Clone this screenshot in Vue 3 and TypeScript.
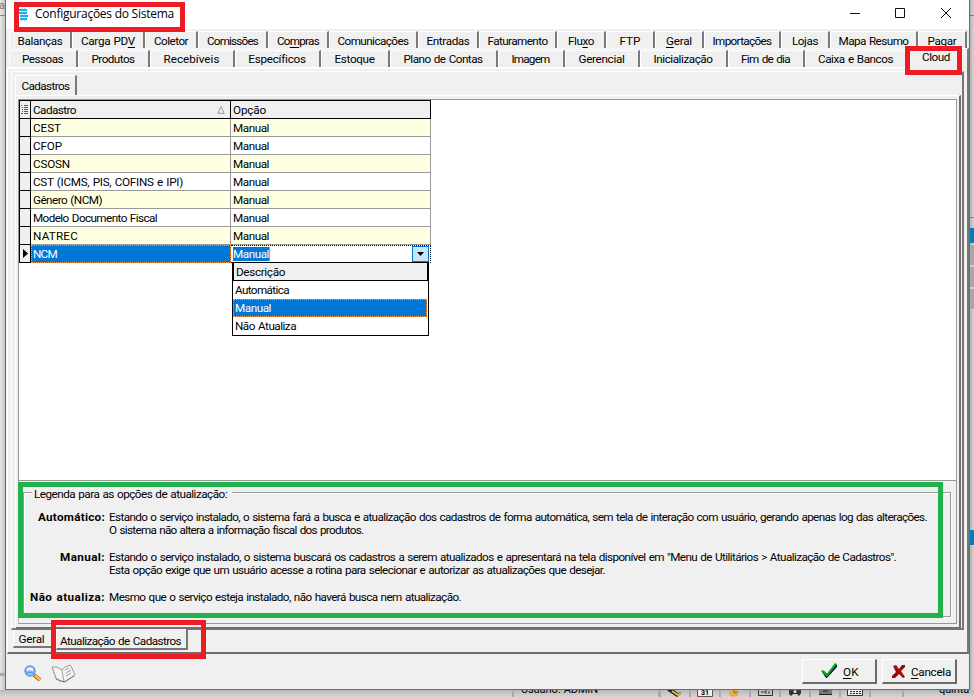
<script setup lang="ts">
import type { ObjectDirective } from 'vue'

interface Tab { w: number; t: number; pre: string; key?: string; post?: string }
interface Entry { label: string; lw: number; lines: { text: string; w: number }[] }

/* Spreads the letters of an element so that its text takes the given width. */
const vFit: ObjectDirective<HTMLElement, number> = {
  mounted(el, binding) {
    const n = (el.textContent ?? '').length
    const natural = el.getBoundingClientRect().width
    const spacing = (binding.value - natural) / n
    el.style.letterSpacing = `${spacing.toFixed(3)}px`
  },
}

const upper: Tab[] = [
  { w: 63, t: 45, pre: 'Balanças' },
  { w: 73, t: 54, pre: 'Carga PD', key: 'V' },
  { w: 53, t: 34, pre: 'Coletor' },
  { w: 70, t: 51, pre: 'Comissões' },
  { w: 61, t: 42, pre: 'Co', key: 'm', post: 'pras' },
  { w: 89, t: 71, pre: 'Comunicações' },
  { w: 61, t: 43, pre: 'Entradas' },
  { w: 78, t: 60, pre: 'Faturamento' },
  { w: 49, t: 26, pre: 'Flu', key: 'x', post: 'o' },
  { w: 49, t: 21, pre: 'FTP' },
  { w: 49, t: 26, pre: '', key: 'G', post: 'eral' },
  { w: 77, t: 59, pre: 'Importações' },
  { w: 49, t: 26, pre: 'Lojas' },
  { w: 88, t: 70, pre: 'Mapa Resumo' },
  { w: 49, t: 29, pre: 'Pagar' },
]
const lower: Tab[] = [
  { w: 69, t: 41, pre: 'Pessoas' },
  { w: 72, t: 43, pre: 'Produtos' },
  { w: 85, t: 56, pre: 'Recebíveis' },
  { w: 86, t: 57, pre: 'Específicos' },
  { w: 69, t: 40, pre: 'Estoque' },
  { w: 108, t: 79, pre: 'Plano de Contas' },
  { w: 67, t: 38, pre: 'Imagem' },
  { w: 75, t: 46, pre: 'Gerencial' },
  { w: 88, t: 59, pre: 'Inicialização' },
  { w: 77, t: 49, pre: 'Fim de dia' },
  { w: 103, t: 75, pre: 'Caixa e Bancos' },
]
const rows = [
  { name: 'CEST', w: 28 }, { name: 'CFOP', w: 29 }, { name: 'CSOSN', w: 37 },
  { name: 'CST (ICMS, PIS, COFINS e IPI)', w: 150 }, { name: 'Gênero (NCM)', w: 69 },
  { name: 'Modelo Documento Fiscal', w: 124 }, { name: 'NATREC', w: 45 }, { name: 'NCM', w: 24 },
]
const options = [
  { text: 'Automática', w: 54 }, { text: 'Manual', w: 36 }, { text: 'Não Atualiza', w: 61 },
]
const legend: Entry[] = [
  { label: 'Automático:', lw: 67, lines: [
    { text: 'Estando o serviço instalado, o sistema fará a busca e atualização dos cadastros de forma automática, sem tela de interação com usuário, gerando apenas log das alterações.', w: 818 },
    { text: 'O sistema não altera a informação fiscal dos produtos.', w: 254 } ] },
  { label: 'Manual:', lw: 45, lines: [
    { text: 'Estando o serviço instalado, o sistema buscará os cadastros a serem atualizados e apresentará na tela disponível em "Menu de Utilitários > Atualização de Cadastros".', w: 787 },
    { text: 'Esta opção exige que um usuário acesse a rotina para selecionar e autorizar as atualizações que desejar.', w: 496 } ] },
  { label: 'Não atualiza:', lw: 75, lines: [
    { text: 'Mesmo que o serviço esteja instalado, não haverá busca nem atualização.', w: 352 } ] },
]
</script>

<template>
  <div class="desktop">
    <div class="strip left"><span class="frag">a</span><i class="notch"></i><i class="chip"></i><i class="foot"></i></div>
    <div class="strip right"><i class="a"></i><i class="b"></i><i class="c"></i><i class="d"></i><i class="e"></i></div>
    <div class="status">
      <span class="user"><span v-fit="77">Usuário: ADMIN</span></span>
      <span class="cell"><svg width="16" height="7" viewBox="0 0 16 7"><path d="M0 0h7l4 3 3-1v2l-4 3-9-6z" fill="#222" /><path d="M5 1l6 4 3-2" stroke="#d9c13c" stroke-width="2" fill="none" /></svg></span>
      <span class="cell"><svg width="16" height="7" viewBox="0 0 16 7"><path d="M.5 0v6.5h15V0" fill="#eee" stroke="#555" /><text x="4" y="5" font-size="7" font-weight="bold">31</text></svg></span>
      <span class="cell"><svg width="14" height="7" viewBox="0 0 14 7"><path d="M1 0h9v6l-6 1-3-2z" fill="#e6b04c" /><path d="M6 0v3l4-1" stroke="#8d6424" fill="none" /></svg></span>
      <span class="cell"><svg width="15" height="7" viewBox="0 0 15 7"><path d="M.5 0v5.500h14V0M3 2h4M8 0v4M11 1v3" stroke="#333" fill="none" /></svg></span>
      <span class="cell"><svg width="14" height="7" viewBox="0 0 14 7"><path d="M1 0h12v3l-2 3-2-2H5L3 6 1 4z" fill="#333" /><circle cx="7" cy="1.500" r="1.500" fill="#ddd" /></svg></span>
      <span class="cell"><svg width="15" height="7" viewBox="0 0 15 7"><path d="M1 0h13v5H1z" fill="#777" /><path d="M1 4.500h13M5 1h5" stroke="#222" /></svg></span>
      <span class="cell"><svg width="16" height="7" viewBox="0 0 16 7"><path d="M.5 0v5.500h15V0" stroke="#333" fill="#eee" /><path d="M3 1.500h11M3 3.500h11" stroke="#333" stroke-dasharray="2 1" /></svg></span>
      <span class="cell blank"></span><span class="cell blank"></span>
      <span class="day"><span v-fit="33">quinta-</span></span>
    </div>

    <div class="window">
      <header class="title">
        <svg class="logo" width="9" height="13" viewBox="0 0 9 13"><path d="M0 2h8M0 5h8M1 8h8M1 11h7" stroke="#1ba4e4" stroke-width="2" /><path d="M3 0v13M6 0v13" stroke="#53bcec" /></svg>
        <span class="name"><span v-fit="139">Configurações do Sistema</span></span>
        <svg class="controls" width="104" height="14" viewBox="0 0 104 14"><path d="M0 6.500h10M45.500 1.500h9v9h-9zM91 1l10 10M101 1L91 11" stroke="#111" fill="none" /></svg>
      </header>

      <nav class="tabs upper">
        <div v-for="t in upper" :key="t.pre + t.key" class="tab" :style="{ width: t.w + 'px' }"><span v-fit="t.t">{{ t.pre }}<u v-if="t.key">{{ t.key }}</u>{{ t.post }}</span></div>
      </nav>
      <nav class="tabs lower">
        <div v-for="t in lower" :key="t.pre" class="tab" :style="{ width: t.w + 'px' }"><span v-fit="t.t">{{ t.pre }}</span></div>
        <div class="tab current"><span v-fit="28">Cloud</span></div>
      </nav>

      <section class="page">
        <div class="page2">
          <div class="tabs inner"><div class="tab"><span v-fit="48">Cadastros</span></div></div>
          <div class="page3">
            <div class="gridbox">
              <div class="grid">
                <div class="row head">
                  <div class="ind"><svg width="8" height="9" viewBox="0 0 8 9"><path d="M0 .5h1M3 .5h4M1 2.500h1M3 2.500h4M1 4.500h1M3 4.500h4M1 6.500h1M3 6.500h4M0 8.500h2M3 8.500h4" stroke="#333" stroke-width=".8" /></svg></div>
                  <div class="c1"><span v-fit="43">Cadastro</span><svg width="8" height="8" viewBox="0 0 8 8"><path d="M.8 7.300L4 .8l3.200 6.500z" fill="none" stroke="#999" /></svg></div>
                  <div class="c2"><span v-fit="33">Opção</span></div>
                </div>
                <div v-for="(r, i) in rows" :key="r.name" class="row" :class="{ odd: i % 2 === 0, active: i === 7 }">
                  <div class="ind"><svg v-if="i === 7" width="5" height="9" viewBox="0 0 5 9"><path d="M0 0l5 4.500L0 9z" /></svg></div>
                  <div class="c1"><span v-fit="r.w">{{ r.name }}</span></div>
                  <div class="c2"><span class="val"><span v-fit="36">Manual</span></span><span v-if="i === 7" class="arrow"><svg width="7" height="4" viewBox="0 0 7 4"><path d="M0 0h7L3.500 4z" /></svg></span></div>
                </div>
                <div class="menu">
                  <div class="mhead"><span v-fit="49">Descrição</span></div>
                  <div v-for="(o, i) in options" :key="o.text" class="item" :class="{ sel: i === 1 }"><span v-fit="o.w">{{ o.text }}</span></div>
                </div>
              </div>
            </div>
            <div class="lower-panel">
              <div class="group">
                <div class="caption"><span v-fit="193">Legenda para as opções de atualização:</span></div>
                <div v-for="e in legend" :key="e.label" class="entry">
                  <div class="label"><span v-fit="e.lw">{{ e.label }}</span></div>
                  <div class="desc"><div v-for="l in e.lines" :key="l.text"><span v-fit="l.w">{{ l.text }}</span></div></div>
                </div>
              </div>
            </div>
          </div>
        </div>
        <div class="bottomtabs">
          <div class="bt geral"><span v-fit="26">Geral</span></div>
          <div class="bt cur"><span v-fit="121">Atualização de Cadastros</span></div>
        </div>
      </section>

      <footer class="foot-bar">
        <svg width="18" height="18" viewBox="0 0 18 18"><path d="M10 10l6 5" stroke="#b9731c" stroke-width="4" /><path d="M11 10.500l5 4.200" stroke="#ffc84a" stroke-width="2" /><circle cx="6" cy="6" r="4.800" fill="#a9d4fb" stroke="#6f95e2" stroke-width="1.800" /><path d="M2.500 7.500h7" stroke="#5a9df0" stroke-width="2" /><path d="M3 5q3-3 6 0" stroke="#eef8ff" stroke-width="2" fill="none" /></svg>
        <svg class="book" width="25" height="19" viewBox="0 0 25 19"><path d="M1 3l5 0 5 3 3-3 5-2 1 1 4 9-6 4-5 3-4-1-4-3z" fill="#f4f4f4" stroke="#9a9a9a" /><path d="M11 6l2 12M1 3l4 12" stroke="#a5a5a5" fill="none" /><path d="M5 15l5 2 4 .8 9-6" stroke="#777" fill="none" /><path d="M14 6l4-2M15 9l5-3M15 12l5-3" stroke="#999" /></svg>
        <button class="ok"><svg width="17" height="16" viewBox="0 0 17 16"><path d="M1 9l2-1 3 3 8-10 2 1v2L6 15H5z" fill="#0a0a5c" /><path d="M0 8l2-1 4 4 8-11 2 1-10 13z" fill="#08a80c" /></svg><span v-fit="16"><u>O</u>K</span></button>
        <button class="cancel"><svg width="14" height="15" viewBox="0 0 14 15"><path d="M1 2l3-1 3 4 3-4h3v2l-4 4 4 6-2 1-4-4-4 4-3 0 0-2 4-4z" fill="#980606" /><path d="M2 3h2l3 4 4 5" stroke="#c81818" fill="none" /></svg><span v-fit="40"><u>C</u>ancela</span></button>
      </footer>
    </div>

    <div class="mark m1"></div><div class="mark m2"></div><div class="mark m3"></div><div class="mark m4"></div>
  </div>
</template>

<style>
body { margin: 0; overflow: hidden; }
</style>
<style scoped>
* { box-sizing: border-box; }
.desktop { position: relative; width: 974px; height: 697px; overflow: hidden; background: #d4d4d4; font: 11.7px/13px Roboto, "Liberation Sans", sans-serif; word-spacing: .8px; color: #000; padding-left: 5px; white-space: nowrap; }
span { white-space: pre; }
u { text-decoration: underline; text-underline-offset: 2px; text-decoration-thickness: 1px; }
.strip { position: absolute; top: 0; height: 697px; overflow: hidden; }
.strip i { position: absolute; display: block; left: 0; width: 100%; }
.left { left: 0; width: 5px; background: linear-gradient(90deg, #e8e8e8, #c4c4c4); }
.frag { position: absolute; left: -1px; top: 0; font-size: 11px; line-height: 11px; color: #876; }
.left .notch { top: 15px; height: 1px; background: #888; }
.left .chip { top: 228px; height: 16px; width: 1px; left: 5px; background: #1e5b7a; }
.left .foot { top: 673px; height: 3px; background: #aaa; }
.right { left: 970px; width: 4px; background: linear-gradient(90deg, #b4b4b4, #d5d5d5); }
.right .a { top: 15px; height: 1px; background: #777; }
.right .b { top: 217px; height: 1px; background: #888; }
.right .c { top: 228px; height: 15px; background: #0080bb; }
.right .d { top: 245px; height: 65px; background: repeating-linear-gradient(#a8a8a8 0 20px, #d0d0d0 20px 22px); }
.right .e { top: 530px; height: 15px; background: #0080bb; }
.status { position: absolute; left: 0; top: 690px; width: 974px; height: 7px; overflow: hidden; display: flex; background: linear-gradient(#b8b8b8, #d6d6d6); padding-left: 512px; font-size: 11px; line-height: 13px; }
.user { width: 147px; padding-left: 7px; border-left: 2px solid #aaa; border-right: 1px solid #aaa; display: flex; align-items: flex-start; }
.user span, .day span { display: block; margin-top: -7px; line-height: 13px; }
.cell { width: 30px; border-left: 2px solid #a9a9a9; display: flex; justify-content: center; flex: none; }
.blank { width: 33px; }
.day { margin-left: 4px; display: flex; align-items: flex-start; }

.window { position: relative; width: 965px; height: 690px; border: solid #6c6c6c; border-width: 0 1px 1px; background: #f0f0f0; display: flex; flex-direction: column; }
.title { height: 29px; background: #fff; display: flex; padding: 7px 0 0 13px; }
.logo { margin-top: 1px; }
.name { margin-left: 7px; margin-top: -1px; font: 12px/15px "Open Sans", "Noto Sans", sans-serif; word-spacing: 0; }
.controls { margin-left: auto; margin-right: 15px; margin-top: 0; }
.tabs { display: flex; padding-left: 3px; }
.tab { height: 17px; border-right: 2px solid #7a7a7a; border-top: 1px solid #fff; border-left: 1px solid #fff; border-top-left-radius: 2px; display: flex; justify-content: center; align-items: center; flex: none; }
.tab > span, .bt > span { flex: none; }
.upper { margin-top: 2px; height: 18px; border-bottom: 1px solid #f7f7f7; }
.upper .tab { padding-top: 2px; }
.lower { margin-top: 1px; height: 17px; }
.lower .tab { padding-right: 1px; }
.lower .current { flex: 1; border-left: 0; margin-top: -2px; height: 21px; justify-content: flex-start; padding: 0 0 3px 14px; background: #f0f0f0; position: relative; }
.page { height: 587px; margin: 0 0 0 1px; border-top: 2px solid #fff; border-left: 1px solid #fff; border-right: 2px solid #777; border-bottom: 2px solid #6c6c6c; padding: 2px 3px 0 3px; }
.page2 { height: 559px; border: solid; border-width: 1px 2px 2px 1px; border-color: #fff #777 #777 #fff; padding: 3px 1px 0 3px; }
.inner { padding: 0; height: 20px; }
.inner .tab { width: 62px; height: 20px; padding-top: 1px; }
.page3 { height: 534px; border: solid; border-width: 1px 2px 2px 1px; border-color: #fff #6f6f6f #6f6f6f #fff; padding: 3px 2px 0 2px; }
.gridbox { height: 382px; background: #fff; border: 1px solid #999; }
.grid { position: relative; width: 412px; }
.row { display: flex; height: 18px; }
.row > div { display: flex; align-items: center; border-bottom: 1px solid #999; padding-top: 1px; }
.row .ind { width: 12px; background: #f0f0f0; border: solid #000; border-width: 0 1px 1px; justify-content: center; padding: 0; }
.row .c1 { width: 200px; border-right: 1px solid #999; padding-left: 2px; justify-content: space-between; }
.row .c2 { width: 200px; border-right: 1px solid #999; padding-left: 2px; }
.row.head { height: 19px; background: #f0f0f0; }
.row.head > div { border: 1px solid #000; border-left: 0; }
.row.head .ind { border: 1px solid #000; }
.row.head .c1 { padding-right: 5px; }
.odd .c1, .odd .c2 { background: #ffffe1; }
.row.active .c1 { background: #0078d7; color: #fff; border: 1px dotted #ff9a42; padding: 0 0 0 1px; }
.row.active .c2 { border: 1px dotted #000; border-left: 0; padding-top: 0; }
.active .val { background: #0078d7; color: #fff; height: 14px; border-right: 1px solid #ff8b25; padding-top: 1px; }
.arrow { margin-left: auto; margin-right: 1px; width: 17px; height: 16px; background: #cce4f7; border: 1px solid #0078d7; display: flex; align-items: center; justify-content: center; }
.menu { position: absolute; left: 213px; top: 162px; width: 197px; height: 74px; background: #fff; border: 1px solid #000; }
.mhead { height: 18px; background: #f0f0f0; border: solid #000; border-width: 0 1px 1px; padding-left: 2px; line-height: 18px; }
.item { height: 18px; line-height: 18px; padding-left: 2px; }
.item.sel { background: #0078d7; color: #fff; border: 1px dotted #ff9a42; line-height: 16px; padding-left: 1px; margin-right: 1px; }
.lower-panel { height: 143px; border: 1px solid #999; border-top: 0; border-left-color: #bbb; padding: 11px 5px 0 4px; }
.group { height: 125px; border: 1px solid #999; box-shadow: inset 1px 1px #fff, 1px 1px #fff; }
.caption { width: 200px; margin: -5px 0 0 8px; padding-left: 2px; background: #f0f0f0; line-height: 13px; }
.entry { display: flex; margin-top: 14px; line-height: 13px; }
.caption + .entry { margin-top: 10px; }
.entry + .entry { margin-top: 14px; }
.label { width: 81px; text-align: right; font-weight: 700; }
.desc { margin-left: 4px; }
.bottomtabs { display: flex; padding-left: 2px; }
.bt { border: solid; border-width: 0 2px 2px 1px; border-color: #fff #777 #777 #fff; display: flex; justify-content: center; align-items: center; }
.geral { width: 43px; height: 18px; border-right: 0; padding: 2px 7px 0 0; }
.cur { width: 132px; margin-top: -1px; height: 21px; background: #f0f0f0; padding: 6px 2px 0 0; }
.foot-bar { display: flex; flex: 1; padding: 5px 12px 0 18px; align-items: flex-start; }
.foot-bar > svg { margin-top: 6px; }
.foot-bar .book { margin: 5px 0 0 9px; }
button { font: inherit; color: inherit; margin: 0; padding: 0; width: 75px; height: 25px; background: #f0f0f0; border: solid; border-width: 1px 2px 2px 1px; border-color: #fff #6b6b6b #6b6b6b #fff; display: flex; align-items: center; }
button span { margin-top: 2px; }
.ok { margin-left: auto; padding-left: 18px; gap: 5px; }
.cancel { margin-left: 5px; padding-left: 9px; gap: 5px; }
.mark { position: absolute; border: 5px solid #ed1c24; }
.m1 { left: 14px; top: 2px; width: 171px; height: 30px; }
.m2 { left: 905px; top: 46px; width: 57px; height: 29px; }
.m3 { left: 18px; top: 482px; width: 925px; height: 136px; border-color: #22b14c; }
.m4 { left: 51px; top: 620px; width: 155px; height: 39px; }
</style>
